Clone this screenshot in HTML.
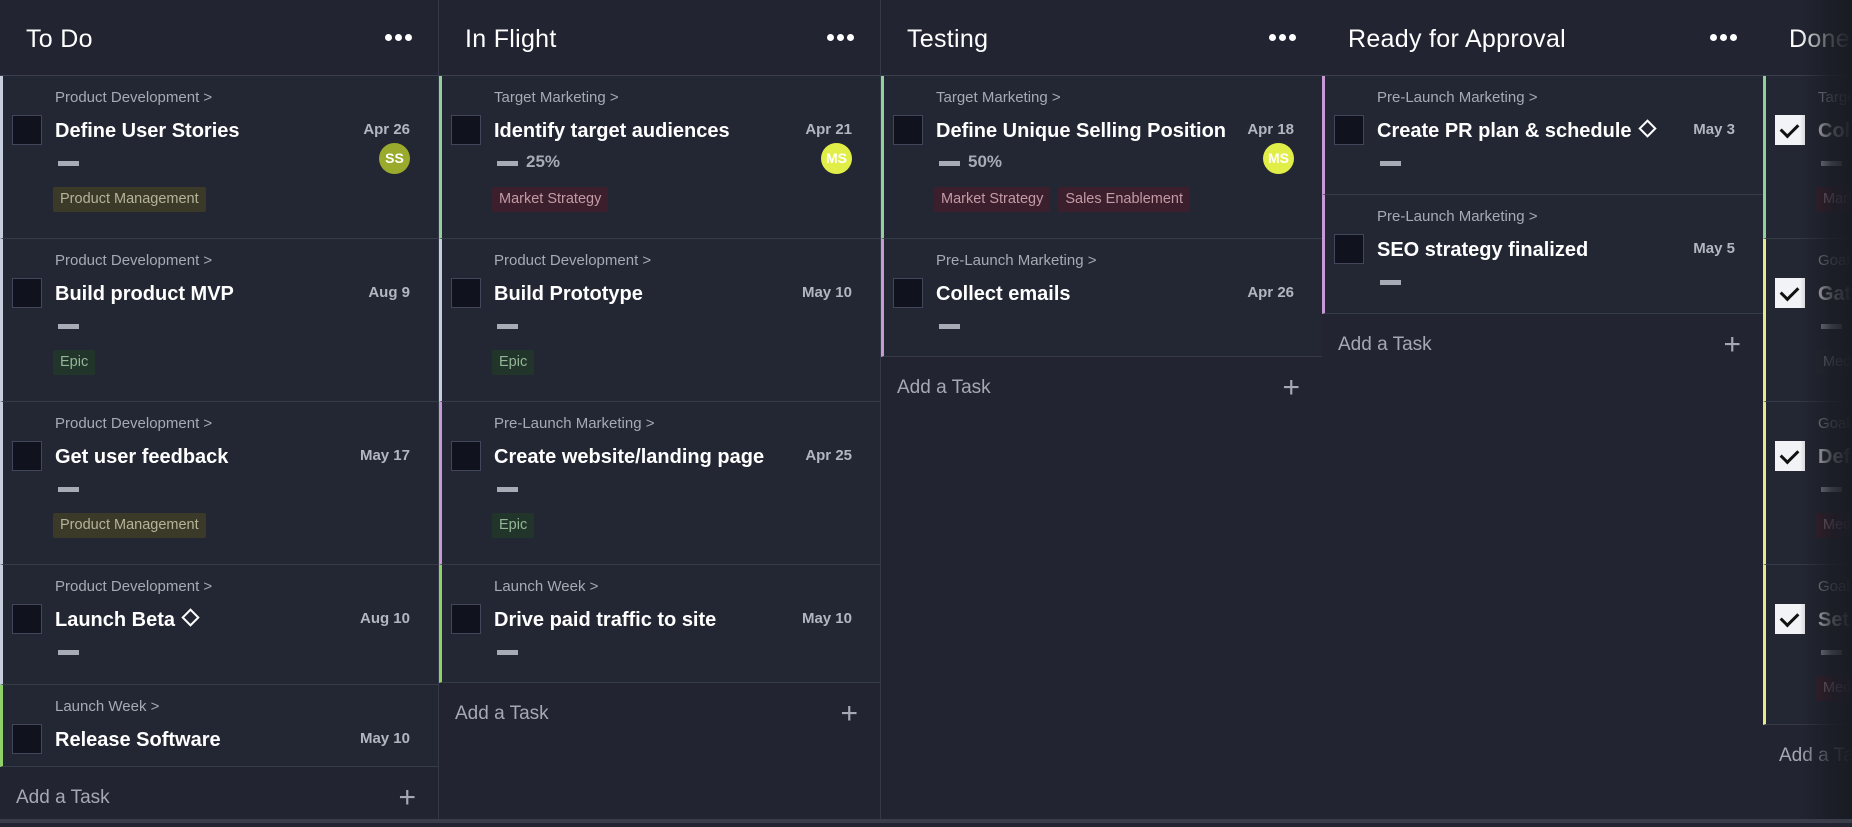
<!DOCTYPE html>
<html><head><meta charset="utf-8">
<style>
*{box-sizing:border-box;margin:0;padding:0}
body{width:1852px;height:823px;overflow:hidden;background:#222531;font-family:"Liberation Sans",Arial,sans-serif;position:relative}
.col{position:absolute;top:0;height:820px;width:442px;border-right:1px solid #343946;background:#222531}
.hd{height:76px;border-bottom:1px solid #3a3f4b;position:relative}
.hd .t{position:absolute;left:26px;top:25px;font-size:25px;color:#fff;letter-spacing:0.3px}
.hd .d{position:absolute;right:26px;top:34px;display:flex;gap:3px}
.hd .d i{display:block;width:7px;height:7px;border-radius:50%;background:#fff}
.card{position:relative;height:163px;border-bottom:1px solid #363b48;border-left:3px solid #c6cedd;background:#232733}
.s{height:120px}
.bc{position:absolute;left:52px;top:13px;font-size:15px;color:#a6aab4}
.cb{position:absolute;left:9px;top:39px;width:30px;height:30px;background:#10131e;border:1px solid #41465a}
.tt{position:absolute;left:52px;top:44px;font-size:20px;font-weight:bold;color:#fff;white-space:nowrap}
.dt{position:absolute;right:28px;top:45px;font-size:15px;font-weight:bold;color:#b2b6c0}
.av{position:absolute;right:28px;top:67px;width:31px;height:31px;border-radius:50%;font-size:14px;font-weight:bold;color:#fff;text-align:center;line-height:31px}
.dash{position:absolute;left:55px;top:85px;width:21px;height:5px;background:#a7abb5}
.pc{position:absolute;left:84px;top:76px;font-size:17px;font-weight:bold;color:#a7abb5}
.tags{position:absolute;left:50px;top:111px;display:flex;gap:8px}
.tag{height:25px;line-height:25px;padding:0 7px;font-size:14.5px;border-radius:2px}
.pm{background:#3b3a28;color:#b5b39a}
.ep{background:#22352a;color:#93b597}
.ms{background:#3c1f2c;color:#c39aa6}
.add{position:relative;height:60px}
.add .a{position:absolute;left:16px;top:20px;font-size:19px;color:#a5a9b3}
.add .p{position:absolute;right:22px;top:14px;font-size:30px;color:#a5a9b3;font-weight:300}
.dia{display:inline-block;width:13px;height:13px;border:2.5px solid #fff;transform:rotate(45deg);margin-left:9px;vertical-align:2px}
.chk{background:#f2f3f6;border:none}
.chk:after{content:"";position:absolute;left:9px;top:5px;width:8px;height:14px;border:solid #111;border-width:0 3px 3px 0;transform:rotate(45deg)}
</style></head><body>

<div class="col" style="left:0;width:439px">
 <div class="hd"><div class="t">To Do</div><div class="d"><i></i><i></i><i></i></div></div>
 <div class="card"><div class="bc">Product Development &gt;</div><div class="cb"></div><div class="tt">Define User Stories</div><div class="dt">Apr 26</div><div class="av" style="background:#9aaa2c">SS</div><div class="dash"></div><div class="tags"><div class="tag pm">Product Management</div></div></div>
 <div class="card"><div class="bc">Product Development &gt;</div><div class="cb"></div><div class="tt">Build product MVP</div><div class="dt">Aug 9</div><div class="dash"></div><div class="tags"><div class="tag ep">Epic</div></div></div>
 <div class="card"><div class="bc">Product Development &gt;</div><div class="cb"></div><div class="tt">Get user feedback</div><div class="dt">May 17</div><div class="dash"></div><div class="tags"><div class="tag pm">Product Management</div></div></div>
 <div class="card s"><div class="bc">Product Development &gt;</div><div class="cb"></div><div class="tt">Launch Beta<span class="dia"></span></div><div class="dt">Aug 10</div><div class="dash"></div></div>
 <div class="card" style="height:82px;border-left-color:#8fd068"><div class="bc">Launch Week &gt;</div><div class="cb"></div><div class="tt">Release Software</div><div class="dt">May 10</div></div>
 <div class="add"><div class="a">Add a Task</div><div class="p">+</div></div>
</div>

<div class="col" style="left:439px">
 <div class="hd"><div class="t">In Flight</div><div class="d"><i></i><i></i><i></i></div></div>
 <div class="card" style="border-left-color:#93cf9a"><div class="bc">Target Marketing &gt;</div><div class="cb"></div><div class="tt">Identify target audiences</div><div class="dt">Apr 21</div><div class="av" style="background:#e2ee48">MS</div><div class="dash"></div><div class="pc">25%</div><div class="tags"><div class="tag ms">Market Strategy</div></div></div>
 <div class="card"><div class="bc">Product Development &gt;</div><div class="cb"></div><div class="tt">Build Prototype</div><div class="dt">May 10</div><div class="dash"></div><div class="tags"><div class="tag ep">Epic</div></div></div>
 <div class="card" style="border-left-color:#c79ad6"><div class="bc">Pre-Launch Marketing &gt;</div><div class="cb"></div><div class="tt">Create website/landing page</div><div class="dt">Apr 25</div><div class="dash"></div><div class="tags"><div class="tag ep">Epic</div></div></div>
 <div class="card s" style="border-left-color:#8fd068;height:118px"><div class="bc">Launch Week &gt;</div><div class="cb"></div><div class="tt">Drive paid traffic to site</div><div class="dt">May 10</div><div class="dash"></div></div>
 <div class="add"><div class="a">Add a Task</div><div class="p">+</div></div>
</div>

<div class="col" style="left:881px">
 <div class="hd"><div class="t">Testing</div><div class="d"><i></i><i></i><i></i></div></div>
 <div class="card" style="border-left-color:#93cf9a"><div class="bc">Target Marketing &gt;</div><div class="cb"></div><div class="tt">Define Unique Selling Position</div><div class="dt">Apr 18</div><div class="av" style="background:#e2ee48">MS</div><div class="dash"></div><div class="pc">50%</div><div class="tags"><div class="tag ms">Market Strategy</div><div class="tag ms">Sales Enablement</div></div></div>
 <div class="card s" style="border-left-color:#c79ad6;height:118px"><div class="bc">Pre-Launch Marketing &gt;</div><div class="cb"></div><div class="tt">Collect emails</div><div class="dt">Apr 26</div><div class="dash"></div></div>
 <div class="add"><div class="a">Add a Task</div><div class="p">+</div></div>
</div>

<div class="col" style="left:1322px">
 <div class="hd"><div class="t">Ready for Approval</div><div class="d"><i></i><i></i><i></i></div></div>
 <div class="card s" style="border-left-color:#c79ad6;height:119px"><div class="bc">Pre-Launch Marketing &gt;</div><div class="cb"></div><div class="tt">Create PR plan &amp; schedule<span class="dia"></span></div><div class="dt">May 3</div><div class="dash"></div></div>
 <div class="card s" style="border-left-color:#c79ad6;height:119px"><div class="bc">Pre-Launch Marketing &gt;</div><div class="cb"></div><div class="tt">SEO strategy finalized</div><div class="dt">May 5</div><div class="dash"></div></div>
 <div class="add"><div class="a">Add a Task</div><div class="p">+</div></div>
</div>

<div class="col" style="left:1763px">
 <div class="hd"><div class="t">Done</div></div>
 <div class="card" style="border-left-color:#93cf9a"><div class="bc">Target Marketing &gt;</div><div class="cb chk"></div><div class="tt">Collect</div><div class="dash"></div><div class="tags"><div class="tag ms">Market Strategy</div></div></div>
 <div class="card" style="border-left-color:#e6e88a"><div class="bc">Goals &gt;</div><div class="cb chk"></div><div class="tt">Gather</div><div class="dash"></div><div class="tags"><div class="tag" style="background:#262a35;color:#9a9ea8">Media</div></div></div>
 <div class="card" style="border-left-color:#e6e88a"><div class="bc">Goals &gt;</div><div class="cb chk"></div><div class="tt">Define</div><div class="dash"></div><div class="tags"><div class="tag ms">Media</div></div></div>
 <div class="card" style="border-left-color:#e6e88a;height:160px"><div class="bc">Goals &gt;</div><div class="cb chk"></div><div class="tt">Set up</div><div class="dash"></div><div class="tags"><div class="tag ms">Media</div></div></div>
 <div class="add"><div class="a">Add a Task</div></div>
</div>
<div style="position:absolute;left:1800px;top:0;width:52px;height:823px;background:linear-gradient(to right,rgba(26,28,36,0),rgba(26,28,36,0.8) 60%,#1a1c24)"></div>
<div style="position:absolute;left:0;top:819px;width:1852px;height:4px;background:#3a3e4a"></div>
</body></html>
